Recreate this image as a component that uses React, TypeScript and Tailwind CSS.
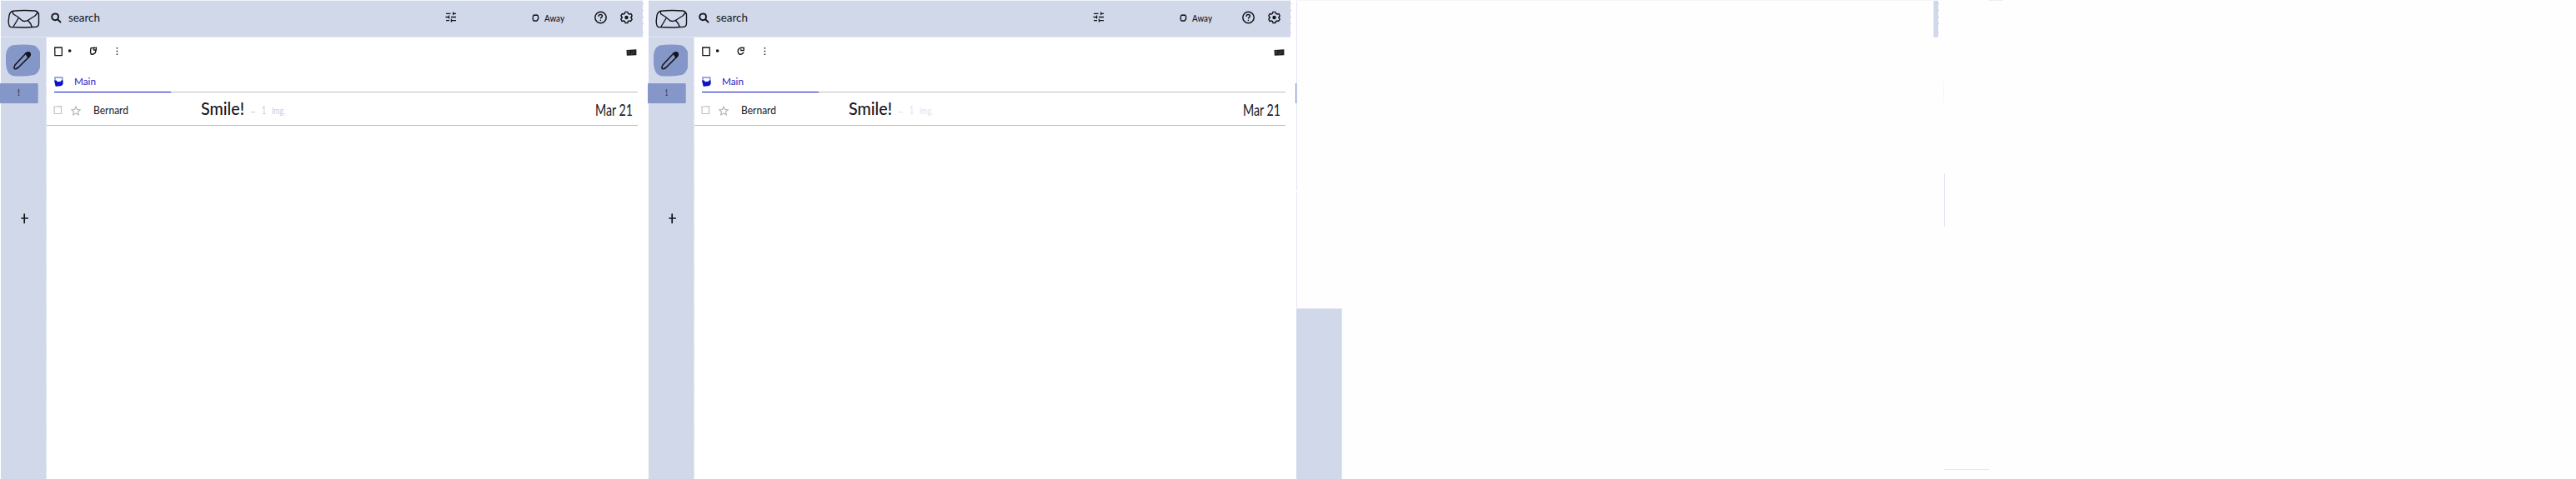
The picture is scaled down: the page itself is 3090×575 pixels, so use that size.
import React from "react";

const hand = "font-['Lato','Open_Sans',sans-serif] whitespace-pre leading-none";

type WordProps = { w: number; h: number; base: number; size: number; fill?: string; children: string; weight?: number };

function Word({ w, h, base, size, fill = "#15161c", children, weight = 400 }: WordProps) {
  return (
    <svg width={w} height={h} className="block shrink-0 overflow-visible">
      <text x={0} y={base} fontSize={size} textLength={w} lengthAdjust="spacingAndGlyphs" fill={fill} fontWeight={weight} className={hand}>
        {children}
      </text>
    </svg>
  );
}

const ink = { fill: "none", stroke: "#15161c", strokeLinecap: "round", strokeLinejoin: "round" } as const;

function Envelope() {
  return (
    <svg width="40" height="24" className="block" {...ink} strokeWidth="1.4">
      <path d="M6.5 2.2Q19 .8 33 2Q36.5 2.8 37.5 6V17Q37.5 21 34 21.3L22 22L4 21.5Q1.2 21 1.2 14L2 7.5Q3 3 6.5 2.2Z" />
      <path d="M6 3L7 6L12 9L18 14Q21.5 15.2 25 13L33 8L36 4.5M13 11L10 16L7 21M25 14L28 18L29 21" />
    </svg>
  );
}

function Pencil() {
  return (
    <svg width="42" height="40" className="block">
      <path d="M8 1.5Q22-.5 35 1.5Q41 5 42 10V28Q40 35 35 37Q20 39.5 9 38Q2 36 1 24V13Q2 4 8 1.5Z" fill="#8497c8" />
      <g {...ink} strokeWidth="1.6">
        <path d="M12 25L25 11Q28 9 30 11Q31 13 29 15L16 28Q12 31 11 29Q10.5 28 12 25Z" />
        <path d="M25 11Q29 9 30 11Q31 13 28 16Z" fill="#15161c" />
      </g>
    </svg>
  );
}

function SearchIcon() {
  return (
    <svg width="14" height="13" className="block" {...ink} strokeWidth="1.9">
      <path d="M5 1.4Q9 1.4 9 5Q9 9.2 5 9.2Q1.2 8.7 1.2 5Q1.5 1.7 5 1.4ZM8.3 8.4L11.5 11.5" />
    </svg>
  );
}

function Sliders() {
  return (
    <svg width="14" height="14" className="block" fill="none" stroke="#15161c" strokeWidth="1.3">
      <path d="M1 3.3H6.5M9 3.3H13M9.7 1.5V5M.5 7.5H5M4.6 5.5V9.5M7 7.5H13M1 11.7H5M7 11.7H13M7.4 9.8V13.5" />
    </svg>
  );
}

function Help() {
  return (
    <svg width="15" height="16" className="block" {...ink} strokeWidth="1.5">
      <circle cx="7.5" cy="8" r="6.7" />
      <path d="M5 6.3Q5.5 4.2 7.8 4.5Q10 5 9.2 7L7.5 8.8M7.4 11.2V11.4" />
    </svg>
  );
}

function Gear() {
  return (
    <svg width="15" height="16" className="block" {...ink} strokeWidth="1.4">
      <path d="M5.8 1.4H9L9.5 3.4L11 4L13 3.5L14.2 6L12.8 8L14.2 10.2L12.5 12.5L10.5 12L9.4 12.7L9 14.5H6L5.5 12.7L4 12L2 12.5L.8 10L2.3 8L.8 5.8L2.4 3.5L4.3 4L5.3 3.4Z" />
      <circle cx="7.5" cy="8" r="1.5" fill="#15161c" />
    </svg>
  );
}

function Refresh({ open }: { open: boolean }) {
  return (
    <svg width="10" height="11" className="block" {...ink} strokeWidth="1.4">
      {open ? (
        <path d="M7 1.4Q3 .8 1.5 3.5Q.6 7 2.8 9Q6 10 7.8 7.2M8.2 1V4.6H4.8V3.4" />
      ) : (
        <path d="M7 1.3L2 1.6Q1 6 2.2 9Q5 9.8 7.3 7.2L8.3 3.5M8.4 1V4H5.4V2" />
      )}
    </svg>
  );
}

function Keyboard() {
  return (
    <svg width="13" height="9" className="block">
      <path d="M.5 1L12.4.3V7.2L.8 7.8Z" fill="#202025" />
      <path d="M2 3H4M9 3H10M3 5H4M6 5.5H7M7.5 4.5H9" stroke="#777780" strokeWidth=".7" />
    </svg>
  );
}

function Inbox() {
  return (
    <svg width="11" height="12" className="block">
      <path d="M.8 1H9.8V8L9 10L2 11Z" fill="none" stroke="#7d8ed0" strokeWidth="1.4" />
      <path d="M0 4.5H2.5L4.5 6.5L6 5.5L7 6.5L8.5 4.5H10.5V9L8.5 11L2 11.7L1 9Z" fill="#0b14c8" />
    </svg>
  );
}

function Star() {
  return (
    <svg width="12" height="12" className="block" fill="none" stroke="#b6b8c2" strokeWidth="1.2" strokeLinejoin="round">
      <path d="M6 .8L7.4 4.3L11.3 4.7L8.3 7.2L9.5 11L6 9L2.5 11L3.5 7.2L.8 4.7L4.6 4.3Z" />
    </svg>
  );
}

function EdgeTicks() {
  return (
    <svg width="1" height="44" className="block" fill="#b9bfcc">
      <path d="M0 3H1V4H0ZM0 11H1V12H0ZM0 19H1V20H0ZM0 27H1V28H0ZM0 37H1V38H0Z" />
    </svg>
  );
}

function MailWindow({ second = false }: { second?: boolean }) {
  const faint = second ? "#dfe2f0" : "#c3cce2";
  const dash = second ? "#d9dcea" : "#bcbec8";
  return (
    <section className="flex h-[575px] w-[777px] shrink-0 flex-col bg-white">
      <div className="ml-px h-px w-[771px] bg-[#f1f3fa]" />
      <div className="ml-px flex">
        <header className="flex h-11 w-[770px] items-start border-b border-[#e2e7f3] bg-[#d0d8ea]">
          <div className="ml-2 mt-[10px] w-[52px]"><Envelope /></div>
          <div className="mt-[14px]"><SearchIcon /></div>
          <div className="ml-[7px] mt-[13px]"><Word w={38} h={14} base={12} size={13.5}>search</Word></div>
          <div className="ml-[414px] mt-[12px]"><Sliders /></div>
          <svg width="9" height="10" className="ml-[90px] mt-[16px] block" {...ink} strokeWidth="1.4"><path d="M2 1.3L6 1Q8.5 2 7.4 6L6 8L2 8Q.4 5 2 1.3Z" /></svg>
          <div className="ml-[6px] mt-[14px]"><Word w={24} h={13} base={11} size={12} weight={500}>Away</Word></div>
          <div className="ml-9 mt-[12px]"><Help /></div>
          <div className="ml-4 mt-[12px]"><Gear /></div>
        </header>
        <EdgeTicks />
      </div>
      <div className="flex h-[530px]">
        <aside className="flex w-14 shrink-0 flex-col">
          <div className="ml-px h-[55px] border-r border-dotted border-[#f4f6fb] bg-[#d0d8ea] pl-[5px] pt-2"><Pencil /></div>
          <div className="flex h-6 border-r border-dotted border-[#f4f6fb] bg-[#d0d8ea]">
            <div className="flex h-6 w-[46px] justify-center border-r border-dotted border-[#b4bcd2] bg-[#8497c8] pt-[7px]">
              <Word w={3} h={9} base={8} size={11} fill="#3c3e48" weight={700}>{second ? "1" : "!"}</Word>
            </div>
          </div>
          <div className="ml-px flex-1 border-r border-dotted border-[#f4f6fb] bg-[#d0d8ea] pl-6 pt-[132px]">
            <svg width="10" height="13" className="block" {...ink} strokeWidth="1.7"><path d="M4.2 1V11.5M1 6H8.2" /></svg>
          </div>
        </aside>
        <main className="flex w-[710px] flex-col">
          <div className="flex h-[43px] items-start pl-[9px] pt-[11px]">
            <svg width="10" height="12" className="block" {...ink} strokeWidth="1.3"><path d="M.7 1H9.3V10.5L.9 10.7Z" /></svg>
            <svg width="4" height="4" className="ml-[7px] mt-[3px] block"><circle cx="1.7" cy="2" r="1.8" fill="#15161c" /></svg>
            <div className="ml-[21px]"><Refresh open={second} /></div>
            <svg width="3" height="11" className="ml-[22px] block" fill="#15161c"><path d="M.7 1H2.2V2.5H.7ZM.7 4.7H2.2V6.2H.7ZM.7 8.5H2.2V10H.7Z" /></svg>
            <div className="ml-[609px] mt-[3px]"><Keyboard /></div>
          </div>
          <div className="ml-[9px] flex h-[23px] w-[700px] border-b border-[#bdbdc4]">
            <div className="flex h-[23px] w-[140px] shrink-0 border-b border-[#0b14c8] pt-1">
              <Inbox />
              <div className="ml-[13px]"><Word w={26} h={12} base={9.5} size={12} fill="#1923c6">Main</Word></div>
            </div>
          </div>
          <div className="flex h-10 w-[709px] items-start border-b border-[#bdbdc4]">
            <svg width="11" height="11" className="ml-[8px] mt-[16px] block" fill="none" stroke="#bfc1cb" strokeWidth="1.2"><path d="M1 1L9.5 .7V9.3L1.2 9.5Z" /></svg>
            <div className="ml-[10px] mt-4"><Star /></div>
            <div className="ml-[15px] mt-4"><Word w={42} h={12} base={10} size={13}>Bernard</Word></div>
            <div className="ml-[87px] mt-[11px]"><Word w={52} h={18} base={16} size={20.5} weight={500}>Smile!</Word></div>
            <div className="ml-[7px] mt-4"><Word w={7} h={13} base={10.5} size={12} fill={dash}>–</Word></div>
            <div className="ml-[7px] mt-4"><Word w={5} h={13} base={10} size={13} fill={faint}>1</Word></div>
            <div className="ml-[7px] mt-4"><Word w={16} h={13} base={10} size={11} fill={faint}>Img.</Word></div>
            <div className="ml-auto mr-[6px] mt-[13px]"><Word w={45} h={16} base={14.5} size={19}>Mar 21</Word></div>
          </div>
        </main>
      </div>
    </section>
  );
}

function BlankWindow() {
  return (
    <section className="flex h-[575px] w-[777px] shrink-0 flex-col">
      <div className="ml-px h-px w-[770px] bg-[#f5f6fb]" />
      <div className="flex h-[369px] justify-between">
        <div className="flex w-[2px] flex-col">
          <div className="ml-px h-[99px] w-px bg-[#e2e7f3]" />
          <div className="flex h-6"><div className="w-px bg-[#7b91cb]" /><div className="w-px bg-[#d9dff0]" /></div>
          <div className="ml-px h-[105px] w-px bg-[#e2e7f3]" />
          <div className="ml-px mt-[2px] h-[139px] w-px bg-[#e2e7f3]" />
        </div>
        <div className="mr-[5px] flex">
          <div className="h-11 w-[6px] border-b border-l border-[#e2e7f3] bg-[#d0d8ea]" />
          <EdgeTicks />
        </div>
      </div>
      <div className="ml-px h-[205px] w-[55px] border-r border-t border-[#e2e7f3] bg-[#d0d8ea]" />
    </section>
  );
}

function EmptyWindow() {
  return (
    <section className="flex h-[575px] w-[759px] flex-col">
      <div className="ml-[55px] flex h-px gap-px">
        <div className="w-[3px] bg-[#e4e7f4]" /><div className="w-[2px] bg-[#e4e7f4]" /><div className="w-[2px] bg-[#e4e7f4]" /><div className="w-[2px] bg-[#e4e7f4]" /><div className="w-[2px] bg-[#e4e7f4]" /><div className="w-px bg-[#e4e7f4]" />
      </div>
      <div className="mt-24 h-[25px] w-px bg-[#f5f6fb]" />
      <div className="ml-px mt-[87px] h-[63px] w-px bg-[#e4e5f4]" />
      <div className="ml-px mt-[291px] h-px w-[54px] bg-[#e4e5f4]" />
    </section>
  );
}

export default function App() {
  return (
    <div className="flex h-[575px] w-[3090px] overflow-hidden bg-[#fefefe]">
      <MailWindow />
      <MailWindow second />
      <BlankWindow />
      <EmptyWindow />
    </div>
  );
}
